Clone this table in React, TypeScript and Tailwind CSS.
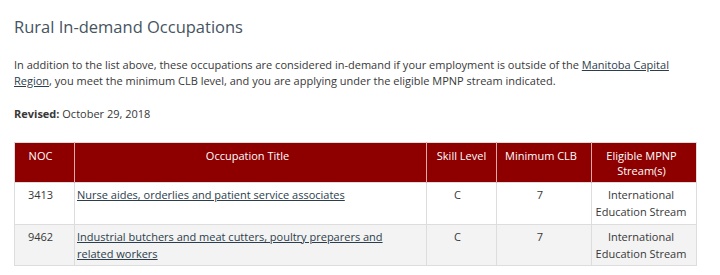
import React from "react";

const rows = [
  {
    noc: "3413",
    title: "Nurse aides, orderlies and patient service associates",
    skill: "C",
    clb: "7",
    stream: "International Education Stream",
  },
  {
    noc: "9462",
    title: "Industrial butchers and meat cutters, poultry preparers and related workers",
    skill: "C",
    clb: "7",
    stream: "International Education Stream",
  },
];

export default function App() {
  return (
    <div
      className="w-[720px] h-[275px] bg-white overflow-hidden pl-[14px] pt-[17px] text-[#383838]"
      style={{ fontFamily: '"Open Sans", sans-serif' }}
    >
      <h2 className="text-[16.5px] leading-[20px] text-[#46545f] font-normal">Rural In-demand Occupations</h2>
      <p className="mt-[20px] text-[11px] leading-[16px] w-[680px]">
        In addition to the list above, these occupations are considered in-demand if your employment is outside of the{" "}
        <a className="underline text-[#2c3e4c]">Manitoba Capital Region</a>, you meet the minimum CLB level, and you are
        applying under the eligible MPNP stream indicated.
      </p>
      <p className="mt-[17px] text-[11px] leading-[16px]">
        <span className="font-bold">Revised:</span> October 29, 2018
      </p>
      <table className="mt-[20px] w-[682px] table-fixed border-collapse text-[11px] border border-[#dddddd]">
        <colgroup>
          <col className="w-[60px]" />
          <col className="w-[352px]" />
          <col className="w-[70px]" />
          <col className="w-[95px]" />
          <col className="w-[105px]" />
        </colgroup>
        <thead>
          <tr className="bg-[#8e0000] text-white h-[40px]">
            <th className="align-top text-center font-medium leading-[15px] pt-[5px] pl-[2px] pr-[10px] border-r border-[#dcaaaa]">NOC</th>
            <th className="align-top text-center font-medium leading-[15px] pt-[5px] pl-[2px] pr-[8px] border-r border-[#dcaaaa]">Occupation Title</th>
            <th className="align-top text-center font-medium leading-[15px] pt-[5px] px-[2px] border-r border-[#dcaaaa]">Skill Level</th>
            <th className="align-top text-center font-medium leading-[15px] pt-[5px] pl-[2px] pr-[8px] border-r border-[#dcaaaa]">Minimum CLB</th>
            <th className="align-top text-center font-medium leading-[15px] pt-[5px] pl-[1px] pr-[6px]">
              <span className="inline-block max-w-[80px]">Eligible MPNP Stream(s)</span>
            </th>
          </tr>
        </thead>
        <tbody>
          {rows.map((r, i) => (
            <tr key={r.noc} className={`border-t border-[#dddddd] ${i === 1 ? "bg-[#f3f3f3] h-[41px]" : "bg-white h-[42px]"}`}>
              <td className="align-top text-center leading-[17px] pt-[3px] pl-[2px] pr-[10px] border-r border-[#dddddd]">{r.noc}</td>
              <td className="align-top text-left leading-[17px] pt-[3px] pl-[2px] pr-[10px] border-r border-[#dddddd]">
                <a className="underline text-[#2c3e4c] inline-block max-w-[315px]">{r.title}</a>
              </td>
              <td className="align-top text-center leading-[17px] pt-[3px] pl-[2px] pr-[10px] border-r border-[#dddddd]">{r.skill}</td>
              <td className="align-top text-center leading-[17px] pt-[3px] pl-[2px] pr-[10px] border-r border-[#dddddd]">{r.clb}</td>
              <td className="align-top text-center leading-[17px] pt-[3px] pl-0 pr-[6px]">{r.stream}</td>
            </tr>
          ))}
        </tbody>
      </table>
    </div>
  );
}
